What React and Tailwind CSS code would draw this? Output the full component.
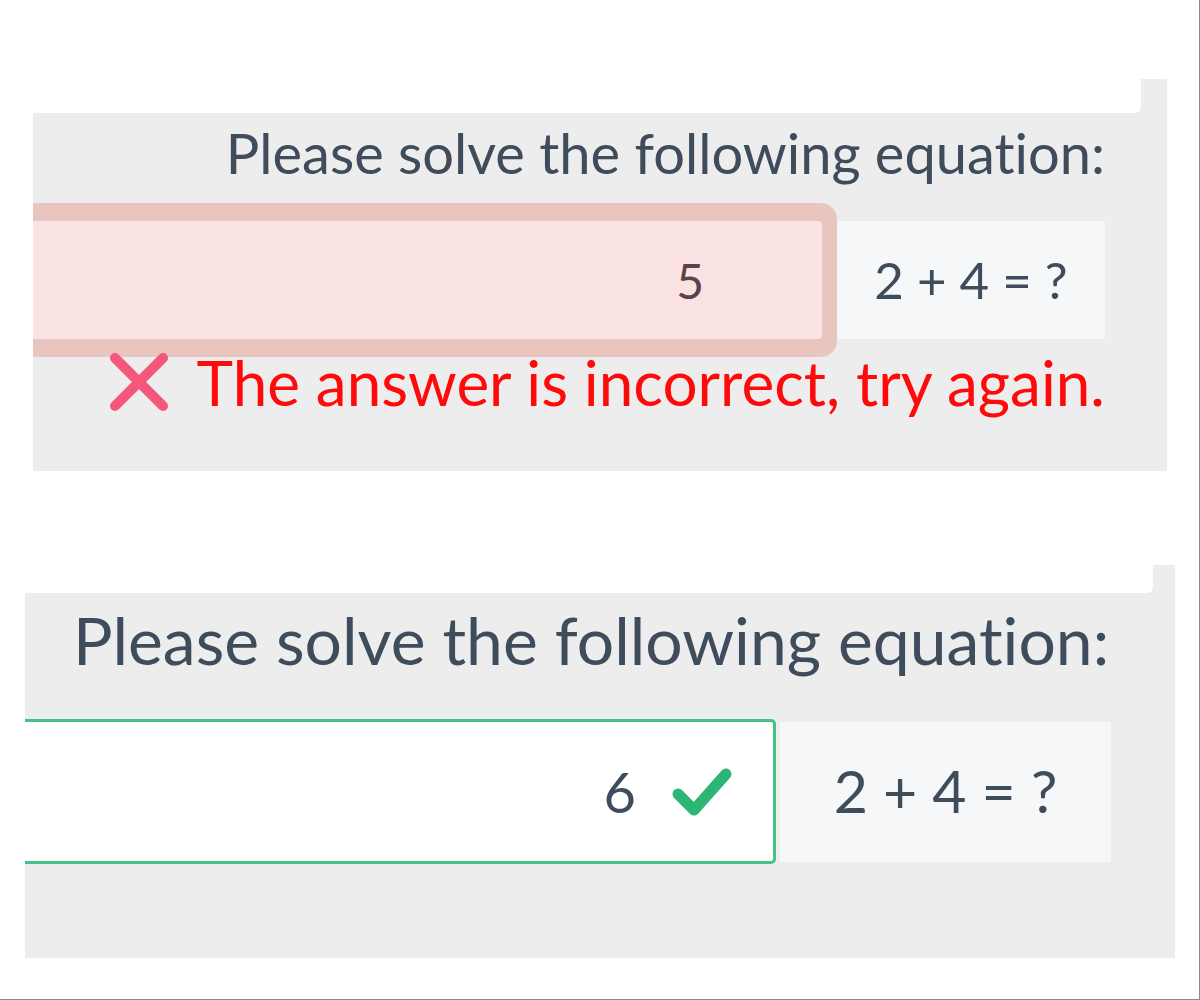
import { useState } from "react";

function CrossIcon() {
  return (
    <svg viewBox="0 0 60 60" className="w-[60px] h-[60px] shrink-0">
      <path d="M6 6 L54 54 M54 6 L6 54" stroke="#f4567c" strokeWidth="10" strokeLinecap="round" fill="none" />
    </svg>
  );
}

function CheckIcon() {
  return (
    <svg viewBox="0 0 64 52" className="w-[64px] h-[52px] shrink-0">
      <path d="M8 28 L24 44 L56 8" stroke="#2db574" strokeWidth="11" strokeLinecap="round" strokeLinejoin="round" fill="none" />
    </svg>
  );
}

export default function App() {
  const [wrong, setWrong] = useState("5");
  const [right, setRight] = useState("6");

  return (
    <div className="w-[1200px] h-[1000px] bg-white border-r border-b border-[#8a8a8a] overflow-hidden font-['Lato','Noto_Sans',sans-serif] [font-variant-ligatures:none] text-[#3e4c5b]">
      {/* Failed attempt */}
      <div className="mt-[79px] ml-[33px] w-[1134px] h-[392px] bg-[#ededed] overflow-hidden flex flex-col">
        <div className="h-[34px] w-[1108px] bg-white rounded-br-[6px]" />
        <h2 className="mt-[12px] pr-[62px] text-right text-[56px] leading-none font-normal">
          Please solve the following equation:
        </h2>
        <div className="mt-[22px] flex items-center pr-[62px]">
          <div className="-ml-[40px] flex-1 bg-[#e9c5c0] rounded-r-[16px] py-[18px] pr-[15px]">
            <input
              value={wrong}
              onChange={(e) => setWrong(e.target.value)}
              className="block w-full h-[118px] bg-[#fbe3e4] rounded-r-[3px] text-right pr-[118px] text-[48px] text-[#5b4448] outline-none [font-variant-ligatures:none]"
            />
          </div>
          <div className="w-[268px] h-[118px] bg-[#f6f7f9] flex items-center justify-center text-[51px]">
            2 + 4 = ?
          </div>
        </div>
        <div className="mt-[-6px] flex items-center justify-end gap-[28px] pr-[62px]">
          <CrossIcon />
          <span className="text-[62px] leading-none text-[#ff0a0a]">The answer is incorrect, try again.</span>
        </div>
      </div>

      {/* Correct attempt */}
      <div className="mt-[94px] ml-[25px] w-[1150px] h-[393px] bg-[#ededed] overflow-hidden flex flex-col">
        <div className="h-[28px] w-[1128px] bg-white rounded-br-[6px]" />
        <h2 className="mt-[14px] pl-[48px] text-[66px] leading-none font-normal">
          Please solve the following equation:
        </h2>
        <div className="mt-[46px] flex items-center pr-[64px]">
          <div className="-ml-[40px] flex-1 h-[145px] bg-white border-[3px] border-[#45c189] rounded-[5px] flex items-center justify-end pr-[39px] gap-[34px]">
            <input
              value={right}
              onChange={(e) => setRight(e.target.value)}
              className="w-[200px] bg-transparent text-right text-[56px] text-[#3e4c5b] outline-none"
            />
            <CheckIcon />
          </div>
          <div className="ml-[4px] w-[331px] h-[140px] bg-[#f6f7f9] flex items-center justify-center text-[59px]">
            2 + 4 = ?
          </div>
        </div>
      </div>
    </div>
  );
}
